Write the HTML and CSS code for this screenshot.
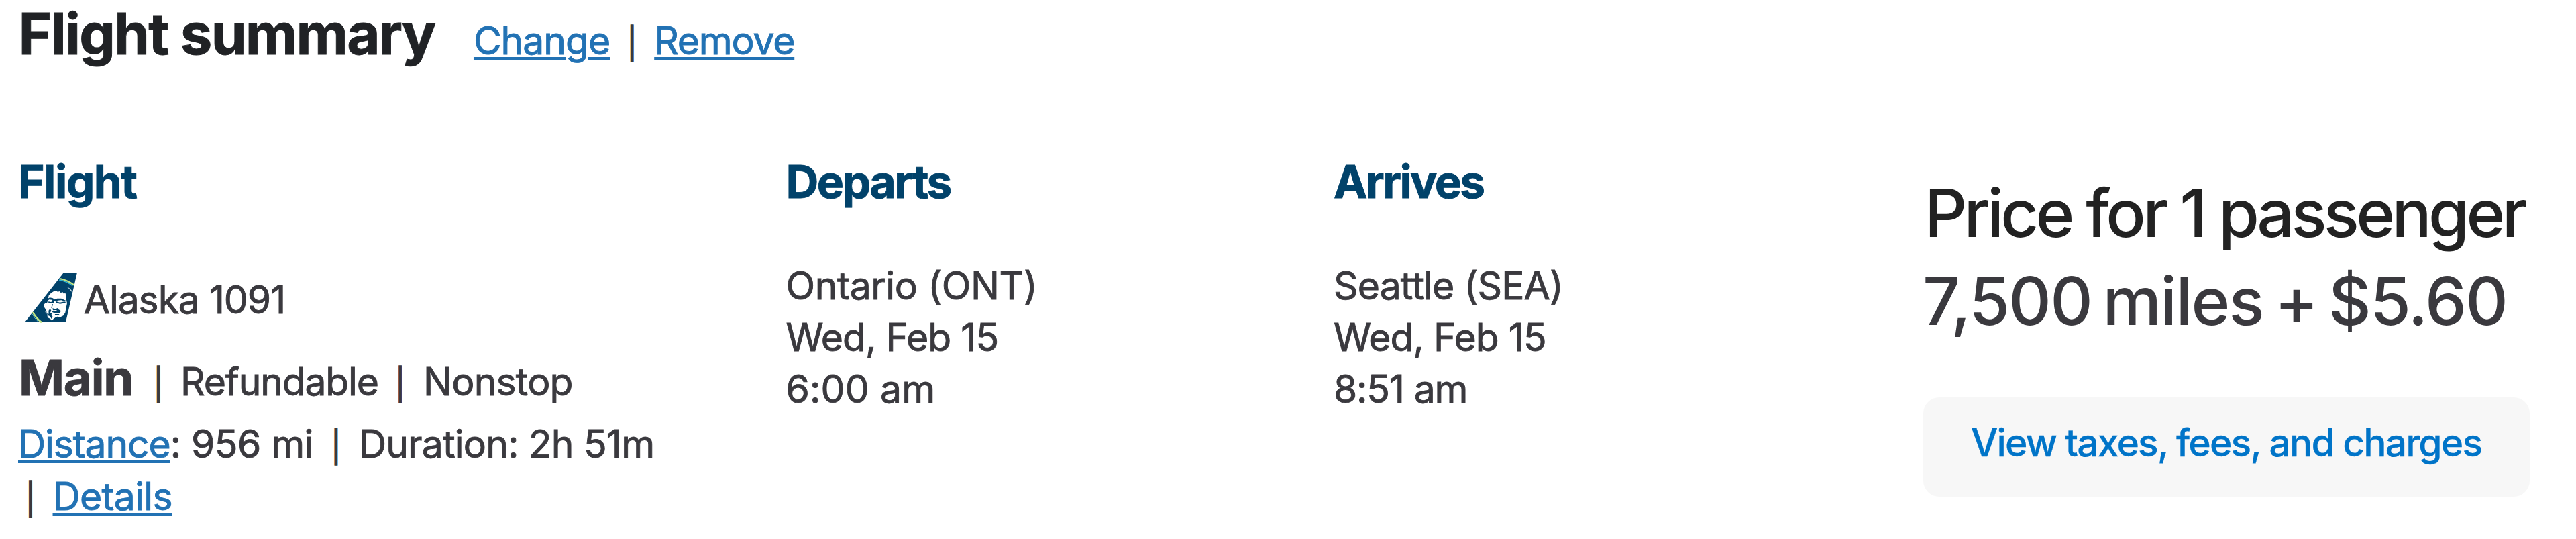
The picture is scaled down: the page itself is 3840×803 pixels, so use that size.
FILE: index.html
```
<!DOCTYPE html>
<html lang="en">
<head>
<meta charset="utf-8">
<title>Flight summary</title>
<link rel="stylesheet" href="styles.css">
</head>
<body>
<main class="summary">
  <header class="summary-head">
    <h1 class="title">Flight summary</h1>
    <a class="link change" href="#">Change</a>
    <span class="bar">|</span>
    <a class="link remove" href="#">Remove</a>
  </header>
  <div class="columns">
    <section class="flight">
      <h2 class="heading heading-flight">Flight</h2>
      <div class="carrier">
        <svg class="tail" viewBox="21 33 235 224" aria-hidden="true">
          <path fill="#01426a" d="M195 33H255L204 255H21Z"/>
          <path fill="none" stroke="#2bb5d4" stroke-width="5" d="M174 66Q205 70 235 92"/>
          <path fill="none" stroke="#c0e585" stroke-width="7" d="M178 60Q212 66 242 89"/>
          <path fill="none" stroke="#56b9d2" stroke-width="3" d="M53 217Q64 238 82 254"/>
          <path fill="none" stroke="#c0e585" stroke-width="8" d="M57 210Q68 234 96 256"/>
          <path fill="#c9dbe6" d="M208 96Q224 101 235 120L229 118Q222 106 208 96Z"/>
          <path fill="#fff" d="M128 136Q140 119 160 113L168 119L177 117L182 124L190 120L194 127L203 126L205 135L206 150L210 170L206 190L202 212L193 226L181 232L166 230L158 234L150 239L142 248L135 240L123 234L121 219L112 209L115 200L108 188L105 178L112 170L121 167L124 158Z"/>
          <path fill="#01426a" d="M123 150L133 145L147 148L153 154L166 149L184 149L204 158V163L184 157L168 158L163 163L178 167L198 163L206 166L196 170L178 173L162 168L158 162L153 162L150 168L136 170L127 167L121 169L128 163L138 165L146 161L143 155L130 154L122 160Z"/>
          <path fill="#01426a" d="M108 190L116 199L119 213L128 218L127 204L134 194L139 203L135 212L143 217L139 223L146 231L140 240L134 229L123 224L120 214L112 208Z"/>
          <path fill="#01426a" d="M145 193L158 196L168 192L172 198L183 205L178 213L153 214L142 209L148 205L168 205L160 201L147 202Z"/>
          <path fill="#01426a" d="M155 219L176 219L170 225L158 224ZM143 174L147 175L143 190L139 193Z"/>
        </svg>
        <span class="carrier-name">Alaska 1091</span>
      </div>
      <div class="fare">
        <strong class="cabin">Main</strong>
        <span class="bar">|</span>
        <span class="refundable">Refundable</span>
        <span class="bar">|</span>
        <span class="nonstop">Nonstop</span>
      </div>
      <div class="facts">
        <a class="link distance" href="#">Distance</a>
        <span class="miles">: 956 mi</span>
        <span class="bar">|</span>
        <span class="duration">Duration: 2h 51m</span>
      </div>
      <div class="facts facts-more">
        <span class="bar">|</span>
        <a class="link details" href="#">Details</a>
      </div>
    </section>
    <section class="stop">
      <h2 class="heading heading-departs">Departs</h2>
      <p class="line ontario">Ontario (ONT)</p>
      <p class="line date">Wed, Feb 15</p>
      <p class="line six">6:00 am</p>
    </section>
    <section class="stop">
      <h2 class="heading heading-arrives">Arrives</h2>
      <p class="line seattle">Seattle (SEA)</p>
      <p class="line date">Wed, Feb 15</p>
      <p class="line eight">8:51 am</p>
    </section>
    <section class="price">
      <h2 class="price-title">Price for 1 passenger</h2>
      <p class="price-total">7,500 miles + $5.60</p>
      <button class="fees">View taxes, fees, and charges</button>
    </section>
  </div>
</main>
</body>
</html>
```

FILE: styles.css
```
* { box-sizing: border-box; }
body {
  margin: 0;
  background: #fff;
  color: #3a393e;
  font: 400 57px/77px Inter, sans-serif;
  -webkit-text-stroke: 0.9px currentColor;
}
h1, h2, p { margin: 0; white-space: nowrap; }
span, a, strong { white-space: nowrap; }

.summary-head { display: flex; align-items: baseline; height: 100px; padding: 0.5px 0 0 27.6px; }
.title { color: #202225; font-size: 85px; line-height: 100px; font-weight: 700; letter-spacing: -1.8px; }
.bar { width: 19px; margin: 0 23.5px; font-size: 46px; text-align: center; -webkit-text-stroke: 1.3px currentColor; }

.link {
  color: #2272b4;
  text-decoration: underline;
  text-decoration-thickness: 4px;
  text-underline-offset: 4px;
}
.change { margin-left: 57.6px; letter-spacing: -1px; }
.remove { letter-spacing: -1.2px; }

.columns {
  display: grid;
  grid-template-columns: 1144.5px 816.5px 879px 904px;
  padding: 131px 0 0 27px;
}
.heading { color: #01426a; font-size: 67.5px; line-height: 80px; font-weight: 700; }
.heading-flight { letter-spacing: -1.5px; }
.heading-departs { letter-spacing: -2.4px; }
.heading-arrives { letter-spacing: -2.65px; }

.carrier { display: flex; height: 80px; margin-top: 96px; padding-left: 10px; line-height: 80px; }
.tail { width: 78.3px; height: 74.7px; margin: -1px 9.4px 0 0; flex: none; }
.carrier-name { letter-spacing: -1.07px; }

.fare { display: flex; align-items: baseline; height: 100px; margin-top: 26px; padding-left: 1px; }
.cabin { font-size: 73px; line-height: 100px; letter-spacing: -1.29px; margin-right: 4.6px; }
.refundable { letter-spacing: -1.17px; }
.nonstop { margin-left: 1.3px; letter-spacing: -0.77px; }

.facts { display: flex; align-items: baseline; height: 78px; line-height: 78px; margin-top: 9.5px; }
.facts-more { margin-top: 0; margin-left: -14.5px; }
.distance { letter-spacing: -1.1px; }
.miles { letter-spacing: -0.54px; white-space: pre; margin-right: 1px; }
.duration { margin-left: 1px; letter-spacing: -0.81px; }
.details { letter-spacing: -0.65px; }

.stop .heading { margin-bottom: 75.5px; }
.ontario { letter-spacing: -0.35px; }
.date { letter-spacing: -0.96px; }
.six { letter-spacing: 0.16px; }
.seattle { letter-spacing: -0.85px; }
.eight { letter-spacing: -1.18px; }

.price { padding-top: 20.7px; }
.price-title, .price-total { font-size: 98.6px; line-height: 131.6px; font-weight: 500; -webkit-text-stroke: 0; }
.price-title { margin-left: 2px; color: #222; letter-spacing: -4.71px; }
.price-total { margin-left: -1px; letter-spacing: -1.78px; word-spacing: -8px; }
.fees {
  display: block;
  width: 904px;
  height: 148px;
  margin-top: 76.8px;
  padding: 0 0 13px 71px;
  border: 0;
  border-radius: 24px;
  background: #f7f7f7;
  color: #0074c8;
  font: 500 57px/77px Inter, sans-serif;
  letter-spacing: -1.86px;
  text-align: left;
  white-space: nowrap;
  -webkit-text-stroke: 0.3px currentColor;
}
```
